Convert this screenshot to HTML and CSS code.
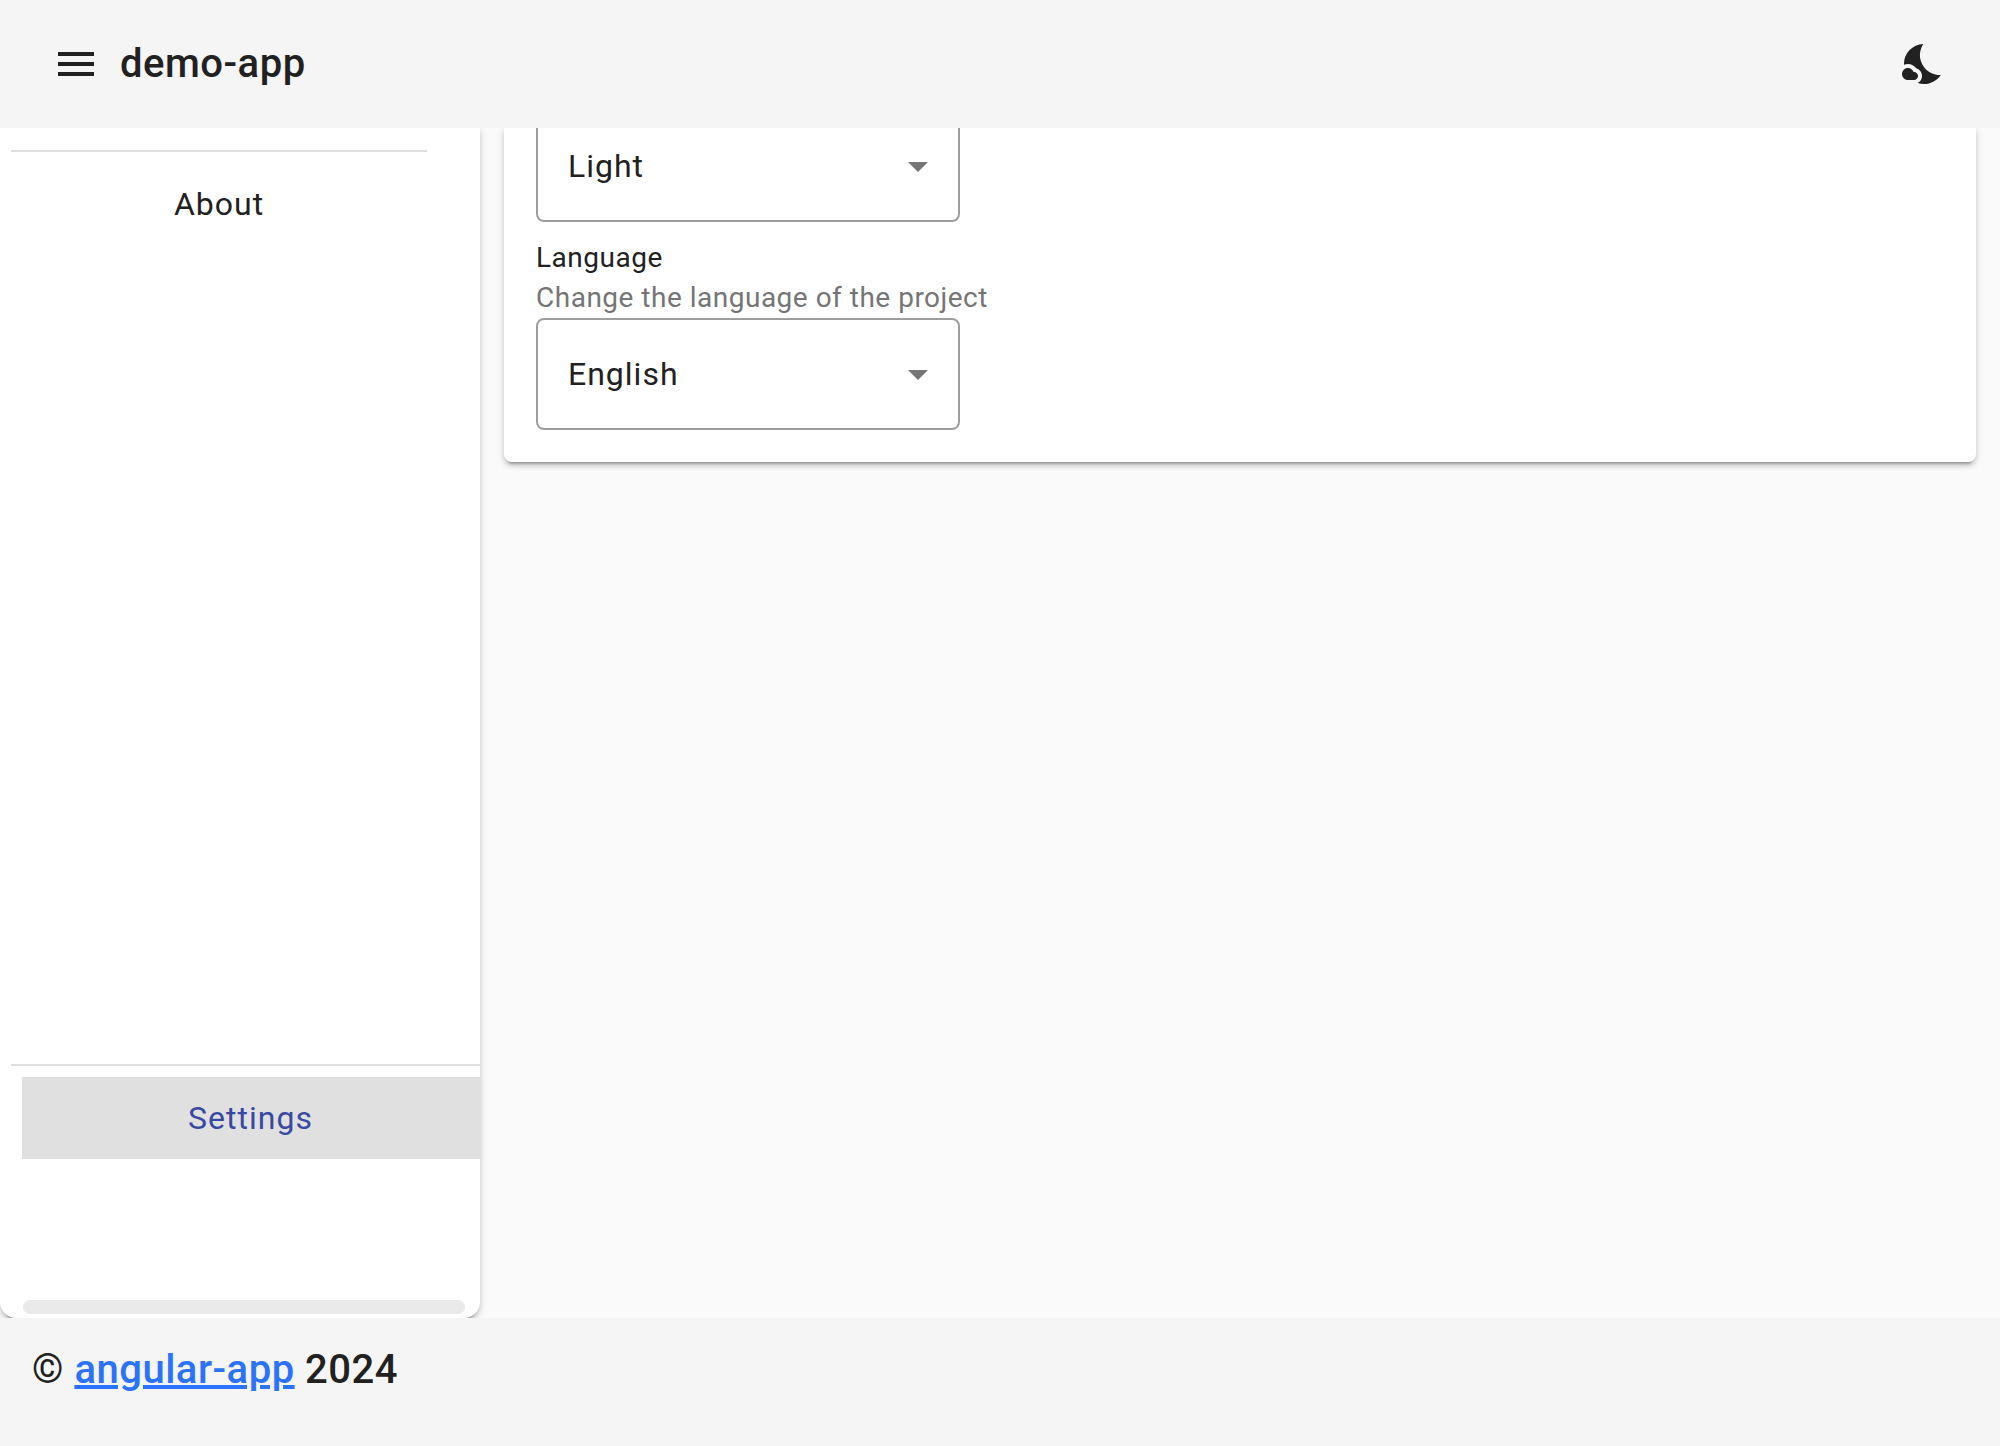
FILE: index.html
```html
<!DOCTYPE html>
<html lang="en">
<head>
<meta charset="utf-8">
<title>demo-app</title>
<link rel="stylesheet" href="styles.css">
</head>
<body>
<header class="toolbar">
  <svg class="icon" viewBox="0 0 24 24"><path d="M3 18h18v-2H3v2zm0-5h18v-2H3v2zm0-7v2h18V6H3z"/></svg>
  <h1 class="title">demo-app</h1>
  <svg class="icon" viewBox="0 0 24 24"><path d="M11.1 12.08c-2.33-4.51-.5-8.48.53-10.07C6.27 2.2 1.98 6.59 1.98 12c0 .14.02.28.02.42.62-.27 1.29-.42 2-.42 1.66 0 3.18.83 4.1 2.15 1.67.48 2.9 2.02 2.9 3.85 0 1.52-.87 2.83-2.12 3.51.98.32 2.03.5 3.11.5 3.5 0 6.58-1.8 8.37-4.52-2.36.23-6.98-.97-9.26-5.41z"/><path d="M7 16h-.18C6.4 14.84 5.3 14 4 14c-1.66 0-3 1.34-3 3s1.34 3 3 3h3c1.1 0 2-.9 2-2s-.9-2-2-2z"/></svg>
</header>
<main class="main">
  <nav class="sidebar">
    <div class="nav-top"><a class="nav-item">About</a></div>
    <div class="nav-bottom"><a class="nav-item active">Settings</a></div>
    <div class="scrollbar"></div>
  </nav>
  <section class="content">
    <div class="card">
      <div class="select"><span>Light</span><i class="arrow"></i></div>
      <div class="label">Language</div>
      <div class="hint">Change the language of the project</div>
      <div class="select"><span>English</span><i class="arrow"></i></div>
    </div>
  </section>
</main>
<footer class="footer">© <a class="link" href="#">angular-app</a> 2024</footer>
</body>
</html>
```

FILE: styles.css
```css
* { box-sizing: border-box; }
body {
  margin: 0;
  height: 1446px;
  display: flex;
  flex-direction: column;
  overflow: hidden;
  background: #fafafa;
  color: #212121;
  font-family: Roboto, "Liberation Sans", sans-serif;
  font-size: 32px;
  letter-spacing: 1px;
}
.toolbar {
  flex: none;
  height: 128px;
  padding: 0 52px;
  display: flex;
  align-items: center;
  background: #f5f5f5;
}
.icon { width: 48px; height: 48px; fill: #212121; }
.title {
  flex: 1;
  margin: 0 0 0 20px;
  font-size: 40px;
  line-height: 64px;
  font-weight: 500;
  letter-spacing: 0.5px;
}
.main { flex: 1; min-height: 0; display: flex; overflow: hidden; }
.sidebar {
  width: 480px;
  display: flex;
  flex-direction: column;
  background: #fff;
  border-radius: 0 0 16px 16px;
  box-shadow: 0 6px 2px -4px rgba(0,0,0,.2), 0 4px 4px rgba(0,0,0,.14), 0 2px 10px rgba(0,0,0,.12);
}
.nav-top {
  flex: 1;
  margin: 22px 53px 0 11px;
  padding-top: 11px;
  border-top: 2px solid #e0e0e0;
}
.nav-item {
  display: flex;
  align-items: center;
  justify-content: center;
  height: 82px;
}
.nav-bottom {
  height: 236px;
  margin: 0 -1px 0 11px;
  padding: 11px 0 0 11px;
  border-top: 2px solid #e0e0e0;
}
.active { padding-right: 2px; background: #e0e0e0; color: #3949a0; }
.scrollbar {
  height: 14px;
  margin: 0 15px 4px 23px;
  border-radius: 7px;
  background: #eaeaea;
}
.content { flex: 1; padding: 0 24px; }
.card {
  height: 334px;
  padding: 0 32px;
  background: #fff;
  border-radius: 0 0 8px 8px;
  box-shadow: 0 6px 2px -4px rgba(0,0,0,.2), 0 4px 4px rgba(0,0,0,.14), 0 2px 10px rgba(0,0,0,.12);
}
.select {
  width: 424px;
  height: 112px;
  padding: 0 30px;
  display: flex;
  align-items: center;
  justify-content: space-between;
  border: 2px solid #9e9e9e;
  border-radius: 8px;
}
.select:first-child {
  height: 94px;
  padding-bottom: 16px;
  border-top: 0;
  border-radius: 0 0 8px 8px;
}
.arrow {
  width: 20px;
  height: 10px;
  margin-top: 2px;
  background: #757575;
  clip-path: polygon(0 0, 100% 0, 50% 100%);
}
.label, .hint { height: 40px; font-size: 28px; line-height: 40px; letter-spacing: 0.5px; }
.label { margin-top: 16px; }
.hint { color: #757575; }
.footer {
  flex: none;
  height: 128px;
  padding: 20px 32px;
  background: #f5f5f5;
  font-size: 40px;
  line-height: 64px;
  font-weight: 500;
  letter-spacing: 0.5px;
}
.link { color: #2a73fa; }
```
